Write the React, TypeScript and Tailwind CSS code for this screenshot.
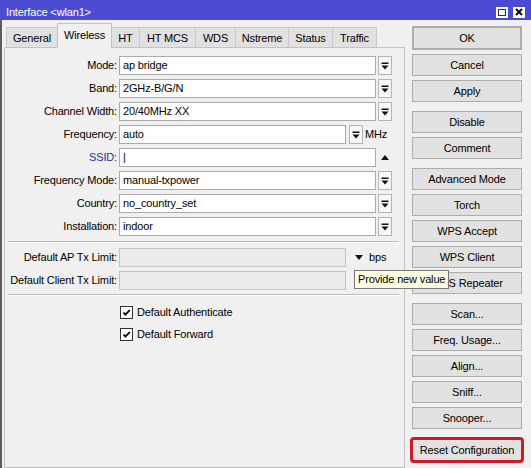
const TABS = [
  { name: "General", w: "w-[52px]" },
  { name: "Wireless", w: "w-[55px]", active: true },
  { name: "HT", w: "w-[29px]" },
  { name: "HT MCS", w: "w-[57px]" },
  { name: "WDS", w: "w-[41px]" },
  { name: "Nstreme", w: "w-[54px]" },
  { name: "Status", w: "w-[45px]" },
  { name: "Traffic", w: "w-[45px]" },
];

const SELECTS = [
  { label: "Mode:", value: "ap bridge" },
  { label: "Band:", value: "2GHz-B/G/N" },
  { label: "Channel Width:", value: "20/40MHz XX" },
];

const SELECTS2 = [
  { label: "Frequency Mode:", value: "manual-txpower" },
  { label: "Country:", value: "no_country_set" },
  { label: "Installation:", value: "indoor" },
];

function DropGlyph() {
  return (
    <svg width="8" height="8" viewBox="0 0 8 8">
      <rect x="0.5" y="0.5" width="7" height="1.5" fill="#111" />
      <path d="M0.5 3.5h7L4 7.5z" fill="#111" />
    </svg>
  );
}

function DropBtn({ className = "" }: { className?: string }) {
  return (
    <div
      className={`flex h-[19px] w-[14px] items-center justify-center border border-[#b4b4b4] bg-[#f7f7f7] ${className}`}
    >
      <DropGlyph />
    </div>
  );
}

function Label({ children, blue }: { children: React.ReactNode; blue?: boolean }) {
  return (
    <div
      className={`w-[112px] shrink-0 text-right ${blue ? "text-[#2f2f9c]" : "text-black"}`}
    >
      {children}
    </div>
  );
}

function Input({
  value,
  w = "w-[257px]",
  disabled,
}: {
  value?: string;
  w?: string;
  disabled?: boolean;
}) {
  return (
    <div
      className={`ml-[2px] flex h-[19px] ${w} items-center border pl-[3px] ${
        disabled ? "border-[#c2c2c2] bg-[#ebebeb]" : "border-[#ababab] bg-white"
      }`}
    >
      {value}
    </div>
  );
}

function SelectRow({ label, value }: { label: string; value: string }) {
  return (
    <div className="flex h-[19px] items-center">
      <Label>{label}</Label>
      <Input value={value} />
      <DropBtn className="ml-[2px]" />
    </div>
  );
}

function Down() {
  return (
    <svg width="8" height="5" viewBox="0 0 8 5">
      <path d="M0 0h8L4 5z" fill="#111" />
    </svg>
  );
}

function Check({ children }: { children: React.ReactNode }) {
  return (
    <div className="flex h-[16px] items-center pl-[115px]">
      <div className="flex h-[13px] w-[13px] items-center justify-center border border-[#333] bg-white">
        <svg width="9" height="9" viewBox="0 0 9 9">
          <path d="M1.5 4.5l2 2.2L7.8 2" fill="none" stroke="#000" strokeWidth="1.8" />
        </svg>
      </div>
      <span className="ml-[4px]">{children}</span>
    </div>
  );
}

function Sep({ className = "" }: { className?: string }) {
  return (
    <div
      className={`ml-[3px] mr-[5px] border-t border-b border-t-[#bdbdbd] border-b-white ${className}`}
    />
  );
}

function Btn({
  children,
  className = "",
}: {
  children: React.ReactNode;
  className?: string;
}) {
  return (
    <div
      className={`flex h-[22px] w-[110px] shrink-0 items-center justify-center border border-[#adadad] bg-[#e1e1e1] ${className}`}
    >
      {children}
    </div>
  );
}

export default function App() {
  return (
    <div className="relative h-[468px] w-[531px] overflow-hidden bg-[#f0f0f0] font-['Liberation_Sans',Arial,sans-serif] text-[11px] leading-none tracking-[-0.15px] text-black">
      {/* title bar */}
      <div className="flex h-[20px] items-center justify-between bg-[#4c4cd2] pt-[4px] pl-[6px] pr-[6px] text-white">
        <span>Interface &lt;wlan1&gt;</span>
        <div className="flex gap-[5px]">
          <div className="flex h-[11px] w-[12px] items-center justify-center bg-white">
            <div className="h-[7px] w-[8px] border-[1.5px] border-[#333]" />
          </div>
          <div className="flex h-[11px] w-[12px] items-center justify-center bg-white">
            <svg width="8" height="8" viewBox="0 0 8 8">
              <path d="M1 1l6 6M7 1L1 7" stroke="#111" strokeWidth="2" />
            </svg>
          </div>
        </div>
      </div>

      <div className="flex h-[448px] border-l-2 border-[#5c5c5c]">
        {/* left: tabs + panel */}
        <div className="ml-[2px] flex w-[401px] flex-col">
          <div className="mt-[3px] flex h-[25px] items-end pl-[2px]">
            {TABS.map((t, i) =>
              t.active ? (
                <div
                  key={t.name}
                  className={`relative z-10 -ml-px flex h-[25px] ${t.w} items-center justify-center border border-b-0 border-[#c3c3c3] bg-[#f0f0f0] pb-[2px]`}
                >
                  {t.name}
                </div>
              ) : (
                <div
                  key={t.name}
                  className={`${i ? "-ml-px" : ""} flex h-[21px] ${t.w} items-center justify-center border border-b-0 border-[#c9c9c9] bg-[#e1e1e1]`}
                >
                  {t.name}
                </div>
              ),
            )}
          </div>

          <div className="-mt-px flex-1 border border-[#c3c3c3] bg-[#f0f0f0] pt-[8px]">
            <div className="flex flex-col gap-[4px]">
              {SELECTS.map((r) => (
                <SelectRow key={r.label} {...r} />
              ))}
              <div className="flex h-[19px] items-center">
                <Label>Frequency:</Label>
                <Input value="auto" w="w-[227px]" />
                <DropBtn className="ml-[3px]" />
                <span className="ml-[2px]">MHz</span>
              </div>
              <div className="flex h-[19px] items-center">
                <Label blue>SSID:</Label>
                <Input value="|" />
                <div className="ml-[2px] flex w-[14px] justify-center">
                  <svg width="8" height="5" viewBox="0 0 8 5">
                    <path d="M0 5h8L4 0z" fill="#111" />
                  </svg>
                </div>
              </div>
              {SELECTS2.map((r) => (
                <SelectRow key={r.label} {...r} />
              ))}
            </div>

            <Sep className="mt-[5px]" />

            <div className="mt-[5px] flex flex-col gap-[4px]">
              <div className="flex h-[19px] items-center">
                <Label>Default AP Tx Limit:</Label>
                <Input w="w-[227px]" disabled />
                <div className="ml-[9px]">
                  <Down />
                </div>
                <span className="ml-[6px]">bps</span>
              </div>
              <div className="flex h-[19px] items-center">
                <Label>Default Client Tx Limit:</Label>
                <Input w="w-[227px]" disabled />
              </div>
            </div>

            <Sep className="mt-[4px]" />

            <div className="mt-[8px] flex flex-col gap-[6px]">
              <Check>Default Authenticate</Check>
              <Check>Default Forward</Check>
            </div>
          </div>
        </div>

        {/* right: buttons */}
        <div className="ml-[7px] flex w-[110px] flex-col pt-[6px]">
          <Btn className="h-[24px] border-2 border-[#111]">OK</Btn>
          <Btn className="mt-[4px]">Cancel</Btn>
          <Btn className="mt-[4px]">Apply</Btn>
          <Btn className="mt-[9px]">Disable</Btn>
          <Btn className="mt-[4px]">Comment</Btn>
          <Btn className="mt-[9px]">Advanced Mode</Btn>
          <Btn className="mt-[4px]">Torch</Btn>
          <Btn className="mt-[4px]">WPS Accept</Btn>
          <Btn className="mt-[4px]">WPS Client</Btn>
          <Btn className="mt-[4px]">WPS Repeater</Btn>
          <Btn className="mt-[9px]">Scan...</Btn>
          <Btn className="mt-[4px]">Freq. Usage...</Btn>
          <Btn className="mt-[4px]">Align...</Btn>
          <Btn className="mt-[4px]">Sniff...</Btn>
          <Btn className="mt-[4px]">Snooper...</Btn>
          <Btn className="mt-[10px] rounded-[2px] outline-[3px] -outline-offset-1 outline-[#cc1d26]">
            Reset Configuration
          </Btn>
        </div>
      </div>

      {/* tooltip */}
      <div className="absolute left-[354px] top-[270px] flex h-[19px] w-[95px] items-center border border-[#767676] bg-[#ffffe1] pl-[3px]">
        Provide new value
      </div>
    </div>
  );
}
